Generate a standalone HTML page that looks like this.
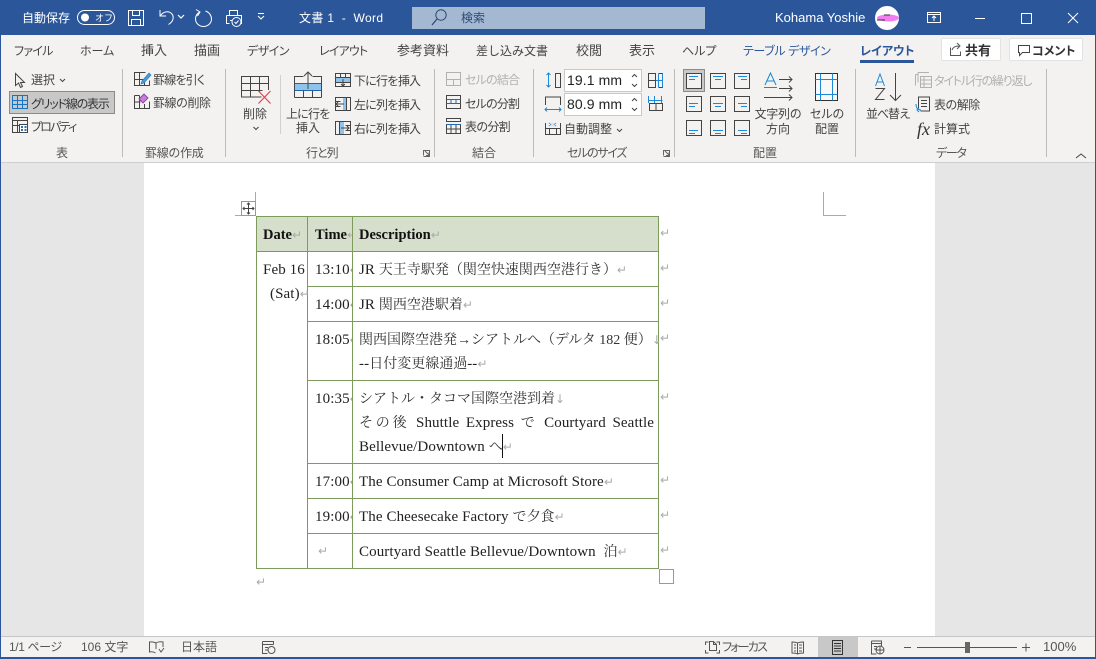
<!DOCTYPE html>
<html lang="ja"><head><meta charset="utf-8"><title>Word</title>
<style>
html,body{margin:0;padding:0;width:1096px;height:659px;overflow:hidden;background:#e6e6e6}
body{position:relative;font-family:"Liberation Sans","Noto Sans CJK JP",sans-serif;font-size:12px;color:#444}
.a{position:absolute}
.t{position:absolute;line-height:16px;white-space:nowrap}
.p{font-feature-settings:"palt"}
.c{transform:translateX(-50%)}
.w{color:#fff}
.tab{font-size:12px;top:43px;color:#444}
.g{color:#555;top:145px}
.off{color:#b1b1b1}
.d{position:absolute;line-height:18px;white-space:nowrap;font-family:"Liberation Serif","Noto Serif CJK JP","Noto Serif CJK SC",serif;font-size:15px;letter-spacing:.1px;color:#222}
.b{font-weight:bold;font-size:14.5px;color:#111;letter-spacing:0}
.j{font-size:14px;letter-spacing:0;color:#333}
.m{font-family:"DejaVu Sans",sans-serif;font-size:12px;color:#aaa;font-weight:normal;letter-spacing:0}
.h{background:#7d9c5b;position:absolute}
svg{position:absolute;left:0;top:0}
.s{fill:none;stroke:#444;stroke-width:1}
.bl{fill:none;stroke:#1e88d6;stroke-width:1}
.in{position:absolute;background:#fff;border:1px solid #c8c8c8;box-sizing:border-box;font-size:14px;line-height:21px;color:#222;padding-left:2px;letter-spacing:.1px}
.cl{overflow:hidden}
</style></head><body>

<div class="a" style="left:0;top:0;width:1096px;height:35px;background:#2b579a"></div>
<div class="a" style="left:1px;top:35px;width:1094px;height:127px;background:#f3f2f1"></div>
<div class="a" style="left:1px;top:162px;width:1094px;height:1px;background:#cfcfcf"></div>
<div class="a" style="left:144px;top:163px;width:791px;height:473px;background:#fff"></div>
<div class="a" style="left:1px;top:636px;width:1094px;height:1px;background:#c6c6c6"></div>
<div class="a" style="left:1px;top:637px;width:1094px;height:20px;background:#f3f2f1"></div>
<div class="a" style="left:0;top:657px;width:1096px;height:2px;background:#2b579a"></div>
<div class="a" style="left:0;top:35px;width:1px;height:624px;background:#2b579a"></div>
<div class="a" style="left:1095px;top:35px;width:1px;height:624px;background:#2b579a"></div>

<div class="a" style="left:412px;top:7px;width:293px;height:22px;background:#a5b8d2"></div>
<div class="a" style="left:941px;top:38px;width:60px;height:23px;background:#fff;border:1px solid #e3e3e3;box-sizing:border-box;border-radius:2px"></div>
<div class="a" style="left:1009px;top:38px;width:74px;height:23px;background:#fff;border:1px solid #e3e3e3;box-sizing:border-box;border-radius:2px"></div>
<div class="a" style="left:860px;top:60px;width:54px;height:3px;background:#2b579a"></div>
<div class="a" style="left:9px;top:91px;width:106px;height:23px;background:#c8c8c8;border:1px solid #8a8a8a;box-sizing:border-box"></div>
<div class="a" style="left:683px;top:69px;width:22px;height:23px;background:#c8c8c8;border:1px solid #8a8a8a;box-sizing:border-box"></div>
<div class="a" style="left:686px;top:73px;width:16px;height:16px;background:#f3f2f1"></div>
<div class="a" style="left:818px;top:637px;width:40px;height:20px;background:#c8c8c8"></div>

<!-- separators -->
<div class="a" style="left:122px;top:69px;width:1px;height:88px;background:#bcbcbc"></div>
<div class="a" style="left:225px;top:69px;width:1px;height:88px;background:#bcbcbc"></div>
<div class="a" style="left:280px;top:75px;width:1px;height:59px;background:#d0d0d0"></div>
<div class="a" style="left:434px;top:69px;width:1px;height:88px;background:#bcbcbc"></div>
<div class="a" style="left:533px;top:69px;width:1px;height:88px;background:#bcbcbc"></div>
<div class="a" style="left:674px;top:69px;width:1px;height:88px;background:#bcbcbc"></div>
<div class="a" style="left:855px;top:69px;width:1px;height:88px;background:#bcbcbc"></div>
<div class="a" style="left:1046px;top:69px;width:1px;height:88px;background:#bcbcbc"></div>

<!-- title text -->
<div class="t w" style="left:22px;top:10px">自動保存</div>
<div class="t w" style="left:95px;top:10px;font-size:9px">オフ</div>
<div class="t w" style="left:299px;top:10px;letter-spacing:.35px">文書 1&nbsp; -&nbsp; Word</div>
<div class="t" style="left:461px;top:10px;color:#2b4a78">検索</div>
<div class="t w" style="left:775px;top:10px;font-size:13px">Kohama Yoshie</div>

<!-- tabs -->
<div class="t tab p" style="left:14px;letter-spacing:-.7px">ファイル</div>
<div class="t tab p" style="left:80px">ホーム</div>
<div class="t tab" style="left:141px;font-size:13px">挿入</div>
<div class="t tab" style="left:194px;font-size:13px">描画</div>
<div class="t tab p" style="left:247px;letter-spacing:-.5px">デザイン</div>
<div class="t tab p" style="left:319px;letter-spacing:-.8px">レイアウト</div>
<div class="t tab" style="left:397px;font-size:13px">参考資料</div>
<div class="t tab" style="left:476px">差し込み文書</div>
<div class="t tab" style="left:576px;font-size:13px">校閲</div>
<div class="t tab" style="left:629px;font-size:13px">表示</div>
<div class="t tab p" style="left:682px">ヘルプ</div>
<div class="t tab p" style="left:743px;color:#2b579a;letter-spacing:-.4px">テーブル デザイン</div>
<div class="t tab p" style="left:860px;color:#2b579a;font-weight:bold">レイアウト</div>
<div class="t" style="left:965px;top:43px;font-weight:bold;font-size:13px;color:#333">共有</div>
<div class="t p" style="left:1032px;top:43px;font-weight:bold;color:#333">コメント</div>

<!-- ribbon labels -->
<div class="t" style="left:31px;top:72px">選択</div>
<div class="t p" style="left:31px;top:96px;color:#333;letter-spacing:-1.2px">グリッド線の表示</div>
<div class="t p" style="left:31px;top:119px;letter-spacing:-1.8px">プロパティ</div>
<div class="t p" style="left:153px;top:72px;letter-spacing:-.8px">罫線を引く</div>
<div class="t" style="left:153px;top:95px;letter-spacing:-.5px">罫線の削除</div>
<div class="t c" style="left:255px;top:106px">削除</div>
<div class="t c" style="left:308px;top:106px;letter-spacing:-1px">上に行を</div>
<div class="t c" style="left:308px;top:120px">挿入</div>
<div class="t" style="left:354px;top:73px;letter-spacing:-1px">下に行を挿入</div>
<div class="t" style="left:354px;top:97px;letter-spacing:-1px">左に列を挿入</div>
<div class="t" style="left:354px;top:121px;letter-spacing:-1px">右に列を挿入</div>
<div class="t off p" style="left:465px;top:72px;letter-spacing:-.8px">セルの結合</div>
<div class="t p" style="left:465px;top:96px;letter-spacing:-.8px">セルの分割</div>
<div class="t" style="left:465px;top:119px;letter-spacing:-.8px">表の分割</div>
<div class="in" style="left:564px;top:69px;width:78px;height:23px">19.1 mm</div>
<div class="in" style="left:564px;top:93px;width:78px;height:23px">80.9 mm</div>
<div class="t" style="left:564px;top:121px">自動調整</div>
<div class="t c" style="left:778px;top:106px;letter-spacing:-.3px">文字列の</div>
<div class="t c" style="left:778px;top:121px">方向</div>
<div class="t c p" style="left:827px;top:106px">セルの</div>
<div class="t c" style="left:827px;top:121px">配置</div>
<div class="t c" style="left:888px;top:106px;letter-spacing:-1px">並べ替え</div>
<div class="t off p" style="left:934px;top:73px;letter-spacing:-1.2px">タイトル行の繰り返し</div>
<div class="t" style="left:934px;top:97px;letter-spacing:-.6px">表の解除</div>
<div class="t" style="left:934px;top:121px">計算式</div>
<div class="t a" style="left:917px;top:119px;font-family:'Liberation Serif',serif;font-style:italic;font-size:18px;line-height:20px;color:#333">fx</div>

<div class="t g c" style="left:62px">表</div>
<div class="t g" style="left:145px;letter-spacing:-.3px">罫線の作成</div>
<div class="t g p" style="left:306px;letter-spacing:-1px">行と列</div>
<div class="t g" style="left:472px">結合</div>
<div class="t g p" style="left:567px;letter-spacing:-1.3px">セルのサイズ</div>
<div class="t g" style="left:753px">配置</div>
<div class="t g p" style="left:936px;letter-spacing:-1.3px">データ</div>

<!-- status -->
<div class="t p" style="left:9px;top:639px;color:#555;letter-spacing:-.4px">1/1 ページ</div>
<div class="t" style="left:81px;top:639px;color:#555">106 文字</div>
<div class="t" style="left:181px;top:639px;color:#555">日本語</div>
<div class="t p" style="left:722px;top:639px;color:#555;letter-spacing:-1.8px">フォーカス</div>
<div class="t" style="left:1043px;top:639px;color:#555;font-size:13px">100%</div>

<!-- table -->
<div class="a" style="left:256px;top:216px;width:402px;height:35px;background:#d6dfcc"></div>
<div class="h" style="left:256px;top:216px;width:403px;height:1px"></div>
<div class="h" style="left:256px;top:251px;width:403px;height:1px"></div>
<div class="h" style="left:307px;top:286px;width:352px;height:1px"></div>
<div class="h" style="left:307px;top:321px;width:352px;height:1px"></div>
<div class="h" style="left:307px;top:380px;width:352px;height:1px"></div>
<div class="h" style="left:307px;top:463px;width:352px;height:1px"></div>
<div class="h" style="left:307px;top:498px;width:352px;height:1px"></div>
<div class="h" style="left:307px;top:533px;width:352px;height:1px"></div>
<div class="h" style="left:256px;top:568px;width:403px;height:1px"></div>
<div class="h" style="left:256px;top:216px;width:1px;height:353px"></div>
<div class="h" style="left:307px;top:216px;width:1px;height:353px"></div>
<div class="h" style="left:352px;top:216px;width:1px;height:353px"></div>
<div class="h" style="left:658px;top:216px;width:1px;height:353px"></div>

<div class="d b" style="left:263px;top:226px">Date<span class="m">↵</span></div>
<div class="d b cl" style="left:315px;top:226px;width:37px">Time<span class="m">↵</span></div>
<div class="d b" style="left:359px;top:226px">Description<span class="m">↵</span></div>
<div class="d cl" style="left:263px;top:261px;width:44px">Feb 16<span class="m">↓</span></div>
<div class="d" style="left:270px;top:285px">(Sat)<span class="m">↵</span></div>
<div class="d cl" style="left:315px;top:261px;width:37px">13:10<span class="m">↵</span></div>
<div class="d cl" style="left:315px;top:296px;width:37px">14:00<span class="m">↵</span></div>
<div class="d cl" style="left:315px;top:331px;width:37px">18:05<span class="m">↵</span></div>
<div class="d cl" style="left:315px;top:390px;width:37px">10:35<span class="m">↵</span></div>
<div class="d cl" style="left:315px;top:473px;width:37px">17:00<span class="m">↵</span></div>
<div class="d cl" style="left:315px;top:508px;width:37px">19:00<span class="m">↵</span></div>
<div class="d m" style="left:318px;top:542px">↵</div>

<div class="d" style="left:359px;top:261px">JR <span class="j">天王寺駅発（関空快速関西空港行き）</span><span class="m">↵</span></div>
<div class="d" style="left:359px;top:296px">JR <span class="j">関西空港駅着</span><span class="m">↵</span></div>
<div class="d" style="left:359px;top:331px"><span class="j">関西国際空港発→シアトルへ（デルタ 182 便）</span><span class="m">↓</span></div>
<div class="d" style="left:359px;top:355px">--<span class="j">日付変更線通過</span>--<span class="m">↵</span></div>
<div class="d" style="left:359px;top:390px"><span class="j">シアトル・タコマ国際空港到着</span><span class="m">↓</span></div>
<div class="d" style="left:359px;top:414px;width:295px;white-space:normal;text-align:justify;text-align-last:justify"><span class="j">その後</span> Shuttle Express <span class="j">で</span> Courtyard Seattle</div>
<div class="d" style="left:359px;top:438px">Bellevue/Downtown <span class="j">へ</span><span class="m">↵</span></div>
<div class="a" style="left:502px;top:434px;width:1px;height:24px;background:#111"></div>
<div class="d" style="left:359px;top:473px">The Consumer Camp at Microsoft Store<span class="m">↵</span></div>
<div class="d" style="left:359px;top:508px">The Cheesecake Factory <span class="j">で夕食</span><span class="m">↵</span></div>
<div class="d" style="left:359px;top:543px">Courtyard Seattle Bellevue/Downtown&nbsp; <span class="j">泊</span><span class="m">↵</span></div>

<div class="d m" style="left:660px;top:224px">↵</div>
<div class="d m" style="left:660px;top:259px">↵</div>
<div class="d m" style="left:660px;top:294px">↵</div>
<div class="d m" style="left:660px;top:329px">↵</div>
<div class="d m" style="left:660px;top:388px">↵</div>
<div class="d m" style="left:660px;top:471px">↵</div>
<div class="d m" style="left:660px;top:506px">↵</div>
<div class="d m" style="left:660px;top:541px">↵</div>
<div class="d m" style="left:256px;top:573px">↵</div>
<div class="a" style="left:659px;top:569px;width:15px;height:15px;border:1px solid #999;box-sizing:border-box;background:#fff"></div>

<svg width="1096" height="659" viewBox="0 0 1096 659">
<!-- title icons -->
<rect x="77.5" y="10.5" width="37" height="14" rx="7" fill="none" stroke="#fff"/>
<circle cx="85" cy="17.5" r="4" fill="#fff"/>
<g fill="none" stroke="#fff" stroke-width="1">
<path d="M128.5 10.500h15v15h-15zM132.500 10.500v5h7v-5M131.500 25.500v-6h9v6"/>
<path d="M160 10v6h6M160.500 15.500c3-4 8-5 11-2 3 3 2 8-3 11"/>
<path d="M178 15l3 3 3-3" stroke-width="1.200"/>
<path d="M200 12c-3 1.500-4.500 4-4.500 7 0 4 3.500 7.500 8 7.500s8-3.500 8-7.500c0-3.500-2.500-7-6-8M196 9.500l4 2.500-2.500 4"/>
<path d="M229.500 15.500v-5h8v5M226.500 15.500h15v8h-4M226.500 15.500v8h3M230 20.500h4"/>
<circle cx="236.500" cy="22" r="4.500" fill="#2b579a"/><path d="M234.500 22l1.500 1.500 2.500-3"/>
<path d="M258 13.500h6M258 16l3 3 3-3" stroke-width="1"/>
<circle cx="441" cy="15" r="5.200" stroke="#2b4a78"/><path d="M437 19l-5 6" stroke="#2b4a78" stroke-width="1.300"/>
<path d="M927.500 12.500h13v10h-13zM927.500 14.500h13M934 21v-5M932 18l2-2 2 2"/>
<path d="M975 18.500h10M1021.500 13.500h10v10h-10zM1068 13l10 10M1078 13l-10 10"/>
</g>
<circle cx="887" cy="18" r="12" fill="#fff"/>
<ellipse cx="888" cy="18" rx="11" ry="3.500" fill="#f27ff0"/>
<path d="M877 20h8M884 15h6" stroke="#333"/>

<!-- share / comment -->
<g class="s"><path d="M950.500 47.500v8h10v-4M952 50c1-3 4-4 7-4M957 43l3 3-3 3" stroke="#555" fill="none"/></g>
<path class="s" d="M1018.500 45.500h11v7h-7l-3 3v-3h-1z"/>

<!-- chevrons -->
<g class="s">
<path d="M60 79l2.500 2.500L65 79M253.500 127l2.500 2.500 2.500-2.500M617 129l2.500 2.500 2.500-2.500M1076 158l5-4 5 4"/>
</g>

<!-- select -->
<path class="s" d="M15.500 73.500v12l3-2.500 2 4.500 2-1-2-4h4z"/>
<!-- grid -->
<g fill="none" stroke="#1774c2"><rect x="12.500" y="95.500" width="15" height="13"/><path d="M17.500 95.500v13M22.500 95.500v13M12.500 100.500h15M12.500 104.500h15"/></g>
<!-- properties -->
<g class="s"><rect x="12.500" y="117.500" width="15" height="15"/><path d="M12.500 120.500h15M12.500 125.500h7M17.500 120.500v12"/></g>
<rect x="19.500" y="124.500" width="8" height="8" fill="#fff" stroke="#444"/>
<path d="M21 126h2v2h-2zM24.500 126h2v2h-2zM21 129h2v2h-2zM24.500 129h2v2h-2z" fill="#2b6fb5"/>

<!-- draw table -->
<g class="s"><path d="M145.500 72.500h-11v13h15v-5M134.500 79.500h10M139.500 72.500v13M144.500 80v5.500"/>
<path d="M134.500 95.500v13h15v-7M134.500 95.500h5M134.500 102h6M139.500 95.500v13M144.500 104v4.500"/></g>
<path d="M142 81l7-8 2 2-7 8-3 1z" fill="#4a9ad8" stroke="#2b7fc0" stroke-width=".7"/>
<path d="M139 99l5-5 4 4-5 5z" fill="#c77fd6" stroke="#8a3fa0" stroke-width=".9"/>

<!-- delete -->
<g class="s"><path d="M268.500 90V76.500h-27v20.500h20M241.500 83.500h27M241.500 90.500h21M250.500 76.500V97M259.500 76.500v16"/></g>
<path d="M258.500 91l12 12.500M270.500 91l-12 12.500" stroke="#e8414e" stroke-width="1.200" fill="none"/>

<!-- insert row above -->
<rect x="294.500" y="84" width="27" height="7" fill="#8fc3ec"/>
<g class="s"><path d="M294.500 97.500V76.500h9M321.500 97.500V76.500h-9M294.500 97.500h27M294.500 83.500h27M294.500 90.500h27M303.500 90.500v7M312.500 90.500v7"/></g>
<path d="M308 89V72M304 76l4-4 4 4" class="s"/>
<path d="M294.500 83.500h27M294.500 90.500h27" stroke="#1b66ac" fill="none"/>

<!-- small inserts -->
<rect x="336" y="78" width="15" height="5" fill="#8fc3ec"/>
<g class="s"><rect x="335.500" y="73.500" width="15" height="13"/><path d="M335.500 77.500h15M335.500 82.500h15M340.500 73.500v4M345.500 73.500v4M343 79v7M341 84l2 2 2-2"/></g>
<rect x="343" y="98" width="3" height="13" fill="#8fc3ec"/>
<g class="s"><rect x="335.500" y="97.500" width="15" height="13"/><path d="M346.500 97.500v13M336 104h8M338 102l-2 2 2 2M335.500 101.500h5M335.500 106.500h5"/></g>
<rect x="340" y="122" width="4" height="13" fill="#8fc3ec"/>
<g class="s"><rect x="335.500" y="121.500" width="15" height="13"/><path d="M339.500 121.500v13M341 128h8M347 126l2 2-2 2M345.500 125.500h5M345.500 130.500h5"/></g>

<!-- merge/split -->
<g fill="none" stroke="#b1b1b1"><rect x="446.500" y="72.500" width="14" height="13"/><path d="M446.500 79.500h14M453.500 79.500v6"/></g>
<g class="s"><rect x="446.500" y="95.500" width="14" height="13"/></g>
<path d="M446.500 99.500h14M446.500 103.500h14M451 99.500v4M456 99.500v4" stroke="#1e6bb8" fill="none"/>
<g class="s"><path d="M446.500 118.500h14v3h-14zM446.500 124.500h14v9h-14zM451 124.500v9M456 124.500v9M446.500 129h14"/></g>
<path d="M446.500 124.500h14" stroke="#1e6bb8"/>

<!-- size icons -->
<g class="s"><path d="M555.500 73.500h5v14h-5z"/></g>
<path class="bl" d="M548.500 73v14M546.500 75l2-2 2 2M546.500 85l2 2 2-2"/>
<g class="s"><path d="M545.500 105v-8h15v8"/></g>
<path class="bl" d="M545 109.500h16M547 107.500l-2 2 2 2M559 107.500l2 2-2 2"/>
<g class="s"><path d="M648.500 73.500h7v14h-7zM648.500 80.500h7M658.500 73.500h4v14h-4"/></g>
<path class="bl" d="M658.500 73.500v14M662.500 73.500v14M656 80.500h7"/>
<g class="s"><path d="M649.500 103.500h13v7h-13zM656 103.500v7"/></g>
<path class="bl" d="M648.500 96v7M654.500 96v7M661.500 96v7M648.500 100.500h14"/>
<g class="s"><path d="M545.500 128.500h15M545.500 134.500h15M549.500 128.500v6M556.500 128.500v6M545.500 123v12M560.500 123v12"/></g>
<path class="bl" d="M549 123l3 3M556 123l-3 3M549 126l3-3M556 126l-3-3" stroke-dasharray="1 1"/>

<!-- alignment grid -->
<g class="s" stroke="#333">
<rect x="686.500" y="73.500" width="15" height="15"/><rect x="710.500" y="73.500" width="15" height="15"/><rect x="734.500" y="73.500" width="15" height="15"/>
<rect x="686.500" y="96.500" width="15" height="15"/><rect x="710.500" y="96.500" width="15" height="15"/><rect x="734.500" y="96.500" width="15" height="15"/>
<rect x="686.500" y="120.500" width="15" height="15"/><rect x="710.500" y="120.500" width="15" height="15"/><rect x="734.500" y="120.500" width="15" height="15"/>
</g>
<g fill="none" stroke="#1e88d6">
<path d="M689 76.500h9M689 79.500h6M713 76.500h10M715 79.500h6M738 76.500h9M741 79.500h6M689 103.500h9M689 106.500h6M713 103.500h10M715 106.500h6M738 103.500h9M741 106.500h6M689 130.500h9M689 133.500h6M713 130.500h10M715 133.500h6M738 130.500h9M741 133.500h6"/>
</g>

<!-- text direction -->
<path fill="none" stroke="#1e88d6" d="M765 85l5.500-12 5.500 12M767 81h7M764 87.500h13"/>
<g class="s"><path d="M779 79.500h13M789 76.500l3 3-3 3M779 88.500h13M789 85.500l3 3-3 3M764 97.500h28M789 94.500l3 3-3 3"/></g>

<!-- cell margins -->
<rect x="815.500" y="73.500" width="22" height="27" fill="#f8f8f8" stroke="#333"/>
<path d="M815.500 79.500h22M815.500 94.500h22M820.500 73.500v27M832.500 73.500v27" stroke="#1e88d6" fill="none"/>

<!-- sort -->
<path fill="none" stroke="#1e88d6" d="M875.500 86l4.500-12 4.500 12M877 82h6"/>
<path class="s" d="M875.500 88.500h9l-9 11h9M895.500 73v27M890 95l5.500 5.500L901 95"/>

<!-- title row / unconvert -->
<g fill="none" stroke="#b1b1b1"><path d="M915.500 74.500h2M915.500 74.500v11M918 72.500h11M918 72.500v10"/><rect x="920.500" y="76.500" width="11" height="11"/><path d="M920.500 80h11M920.500 84h11M924 76.500v11"/></g>
<g class="s"><path d="M918.500 108v-11h11v14h-9M921 100.500h6M921 103.500h6M921 106.500h6"/></g>
<path d="M916 104c0 4 2 6 5 6M919 112l-2-2 2-2" class="bl"/>

<!-- launchers -->
<g fill="none" stroke="#666">
<path d="M423.500 155.500v-5h6v6h-6M425 151l4 4M429 152.500v3h-3M663.500 155.500v-5h6v6h-6M665 151l4 4M669 152.500v3h-3"/>
</g>
<!-- spinners -->
<g fill="none" stroke="#444"><path d="M632 77l2.500-2.500L637 77M632 84l2.500 2.500L637 84M632 101l2.500-2.500L637 101M632 108l2.500 2.500L637 108"/></g>

<!-- crop marks & handle -->
<g fill="none" stroke="#aaa"><path d="M255.500 192v23.500H235M823.500 192v23.500H846"/></g>
<rect x="241.500" y="201.500" width="14" height="14" fill="#fff" stroke="#999"/>
<path d="M248.500 203v11M243 208.500h11M247 204.500l1.500-1.500 1.500 1.500M247 212.500l1.500 1.500 1.500-1.500M244.500 207l-1.500 1.500 1.500 1.500M252.500 207l1.500 1.500-1.500 1.500" fill="none" stroke="#444"/>

<!-- status icons -->
<g fill="none" stroke="#555">
<path d="M156 643c-2-1-4-1.500-6.500-1v10c2.500-.5 4.500 0 6 1M156 643c1-1 4-1.500 7-1v5M156 643v6M159 649l2 3 3-4"/>
<path d="M262.500 641.500h11v3M262.500 641.500v12h5M262.500 644.500h11M265 647.500h3M265 650h3"/>
<circle cx="271.500" cy="650" r="3.500"/>
<path d="M705.500 645v-3h3M719.500 645v-3h-3M705.500 650v3h3M719.500 650v3h-3"/><path d="M709.500 641.500h4l3 3v6h-7zM713.500 641.500v3h3"/>
<path d="M797.500 643c-2-1-4-1-5.500-1v11c2 0 4 0 5.500 1 2-1 4-1 6-1v-11c-2 0-4 0-6 1zM797.500 643v11M794 645h2M794 648h2M794 651h2M799 645h3M799 648h3M799 651h3"/>
<rect x="832.500" y="640.500" width="10" height="14" stroke="#333"/><path d="M834 643.500h7M834 646h7M834 648.500h7M834 651h7" stroke="#333"/>
<path d="M871.500 641h10v5M871.500 641v13h5M871.500 643.500h10M874 646.500h3M874 649h3"/><circle cx="880" cy="650" r="4"/><path d="M876 650h8M880 646v8"/>
<path d="M904 647.500h7M1022 647.500h8M1026 643.500v8M917 647.500h100" />
</g>
<rect x="965" y="642" width="5" height="11" fill="#666"/>
</svg>
</body></html>
